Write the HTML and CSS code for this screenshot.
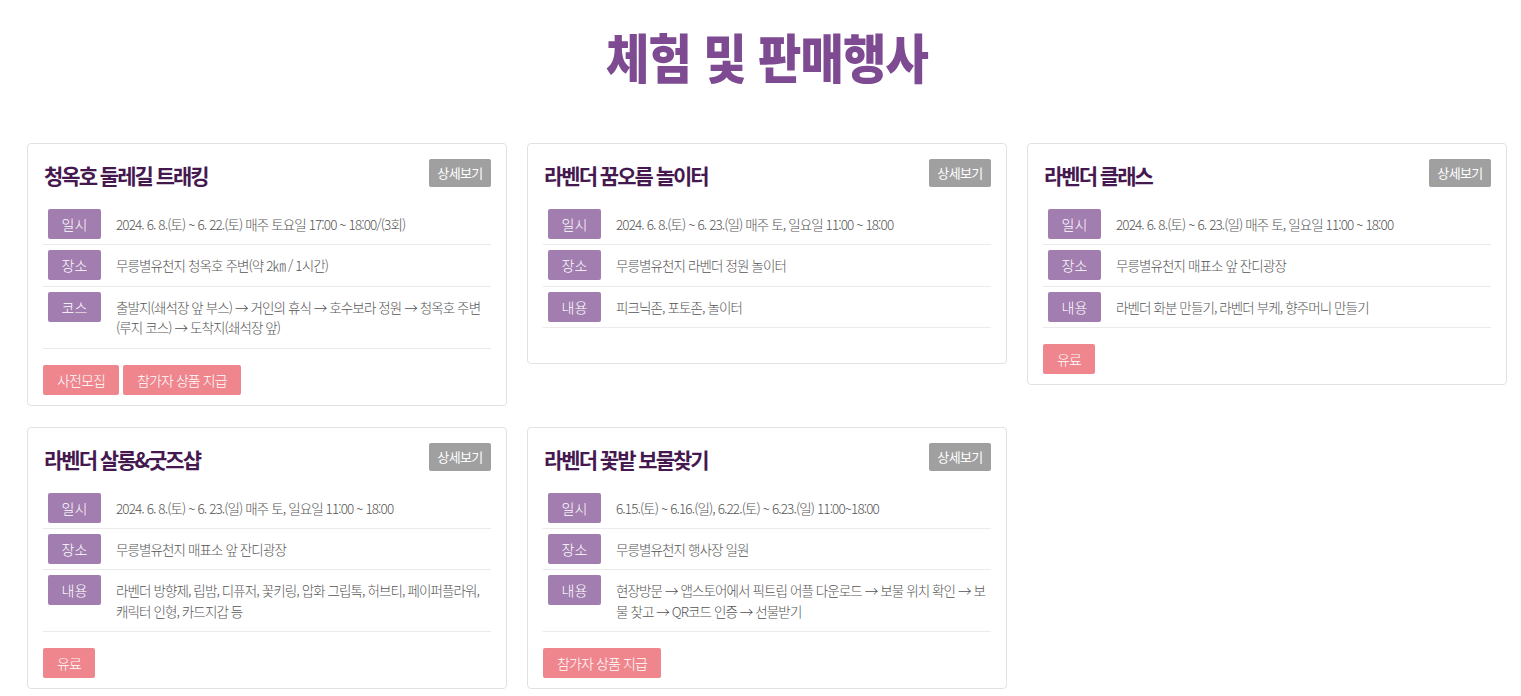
FILE: index.html
```html
<!DOCTYPE html>
<html lang="ko">
<head>
<meta charset="utf-8">
<title>체험 및 판매행사</title>
<link rel="stylesheet" href="styles.css">
</head>
<body>
<div class="page">
  <h1 class="page-title"><span>체험 및 판매행사</span></h1>
  <div class="grid">
    <div class="card">
      <div class="card-head">
        <h2 class="card-title">청옥호 둘레길 트래킹</h2>
        <a class="more">상세보기</a>
      </div>
      <ul class="info">
        <li class="row"><span class="label">일시</span><span class="text">2024. 6. 8.(토) ~ 6. 22.(토) 매주 토요일 17:00 ~ 18:00/(3회)</span></li>
        <li class="row"><span class="label">장소</span><span class="text">무릉별유천지 청옥호 주변(약 2㎞ / 1시간)</span></li>
        <li class="row"><span class="label">코스</span><span class="text">출발지(쇄석장 앞 부스) → 거인의 휴식 → 호수보라 정원 → 청옥호 주변(루지 코스) → 도착지(쇄석장 앞)</span></li>
      </ul>
      <div class="tags"><span class="tag">사전모집</span><span class="tag">참가자 상품 지급</span></div>
    </div>
    <div class="card">
      <div class="card-head">
        <h2 class="card-title">라벤더 꿈오름 놀이터</h2>
        <a class="more">상세보기</a>
      </div>
      <ul class="info">
        <li class="row"><span class="label">일시</span><span class="text">2024. 6. 8.(토) ~ 6. 23.(일) 매주 토, 일요일 11:00 ~ 18:00</span></li>
        <li class="row"><span class="label">장소</span><span class="text">무릉별유천지 라벤더 정원 놀이터</span></li>
        <li class="row"><span class="label">내용</span><span class="text">피크닉존, 포토존, 놀이터</span></li>
      </ul>
      <div class="tags"></div>
    </div>
    <div class="card">
      <div class="card-head">
        <h2 class="card-title">라벤더 클래스</h2>
        <a class="more">상세보기</a>
      </div>
      <ul class="info">
        <li class="row"><span class="label">일시</span><span class="text">2024. 6. 8.(토) ~ 6. 23.(일) 매주 토, 일요일 11:00 ~ 18:00</span></li>
        <li class="row"><span class="label">장소</span><span class="text">무릉별유천지 매표소 앞 잔디광장</span></li>
        <li class="row"><span class="label">내용</span><span class="text">라벤더 화분 만들기, 라벤더 부케, 향주머니 만들기</span></li>
      </ul>
      <div class="tags"><span class="tag">유료</span></div>
    </div>
    <div class="card">
      <div class="card-head">
        <h2 class="card-title">라벤더 살롱&amp;굿즈샵</h2>
        <a class="more">상세보기</a>
      </div>
      <ul class="info">
        <li class="row"><span class="label">일시</span><span class="text">2024. 6. 8.(토) ~ 6. 23.(일) 매주 토, 일요일 11:00 ~ 18:00</span></li>
        <li class="row"><span class="label">장소</span><span class="text">무릉별유천지 매표소 앞 잔디광장</span></li>
        <li class="row"><span class="label">내용</span><span class="text">라벤더 방향제, 립밤, 디퓨저, 꽃키링, 압화 그립톡, 허브티, 페이퍼플라워, 캐릭터 인형, 카드지갑 등</span></li>
      </ul>
      <div class="tags"><span class="tag">유료</span></div>
    </div>
    <div class="card">
      <div class="card-head">
        <h2 class="card-title">라벤더 꽃밭 보물찾기</h2>
        <a class="more">상세보기</a>
      </div>
      <ul class="info">
        <li class="row"><span class="label">일시</span><span class="text">6.15.(토) ~ 6.16.(일), 6.22.(토) ~ 6.23.(일) 11:00~18:00</span></li>
        <li class="row"><span class="label">장소</span><span class="text">무릉별유천지 행사장 일원</span></li>
        <li class="row"><span class="label">내용</span><span class="text">현장방문 → 앱스토어에서 픽트립 어플 다운로드 → 보물 위치 확인 → 보물 찾고 → QR코드 인증 → 선물받기</span></li>
      </ul>
      <div class="tags"><span class="tag">참가자 상품 지급</span></div>
    </div>
  </div>
</div>
</body>
</html>
```

FILE: styles.css
```css
* { box-sizing: border-box; }
html, body { margin: 0; padding: 0; background: #fff; }
body {
  font-family: "Noto Sans CJK KR", "Noto Sans", sans-serif;
  color: #555;
}
.page {
  padding: 0 15px 0 27px;
}
.page-title {
  margin: 0;
  padding-top: 23px;
  height: 143px;
  text-align: center;
  font-size: 53px;
  line-height: 66px;
  font-weight: 900;
  color: #7e4a92;
}
.page-title span {
  display: inline-block;
  transform: scaleX(0.89);
  letter-spacing: -1px;
}
.grid {
  display: grid;
  grid-template-columns: repeat(3, 480px);
  column-gap: 20px;
  row-gap: 21px;
  align-items: start;
}
.card {
  border: 1px solid #e2e2e2;
  border-radius: 4px;
  padding: 15px 15px 10px;
}
.card-head {
  display: flex;
  justify-content: space-between;
  align-items: center;
  height: 28px;
  margin-bottom: 17px;
}
.card-title {
  margin: 0 0 0 1px;
  font-size: 21px;
  font-weight: 700;
  letter-spacing: -2px;
  color: #45184f;
  line-height: 28px;
  padding-top: 4px;
}
.more {
  display: block;
  width: 62px;
  height: 28px;
  line-height: 28px;
  text-align: center;
  background: #a0a0a0;
  color: #fff;
  font-size: 13px;
  letter-spacing: -0.6px;
  border-radius: 2px;
}
.info {
  list-style: none;
  margin: 0;
  padding: 0;
}
.row {
  display: flex;
  align-items: flex-start;
  padding: 5px 0;
  border-bottom: 1px solid #ebebeb;
}
.label {
  flex: none;
  width: 53px;
  height: 30px;
  line-height: 30px;
  margin-left: 5px;
  margin-right: 15px;
  text-align: center;
  background: #a27db0;
  color: #fff;
  font-size: 14px;
  font-weight: 300;
  border-radius: 2px;
}
.text {
  padding: 5px 0;
  font-size: 13.5px;
  line-height: 20.4px;
  font-weight: 300;
  letter-spacing: -0.9px;
  color: #555;
}
.tags {
  display: flex;
  gap: 4px;
  margin-top: 16px;
  min-height: 9px;
}
.tag {
  display: block;
  height: 30px;
  line-height: 30px;
  padding: 0 14px;
  background: #ef868e;
  color: #fff;
  font-size: 14px;
  font-weight: 300;
  letter-spacing: -0.9px;
  border-radius: 2px;
}
```
